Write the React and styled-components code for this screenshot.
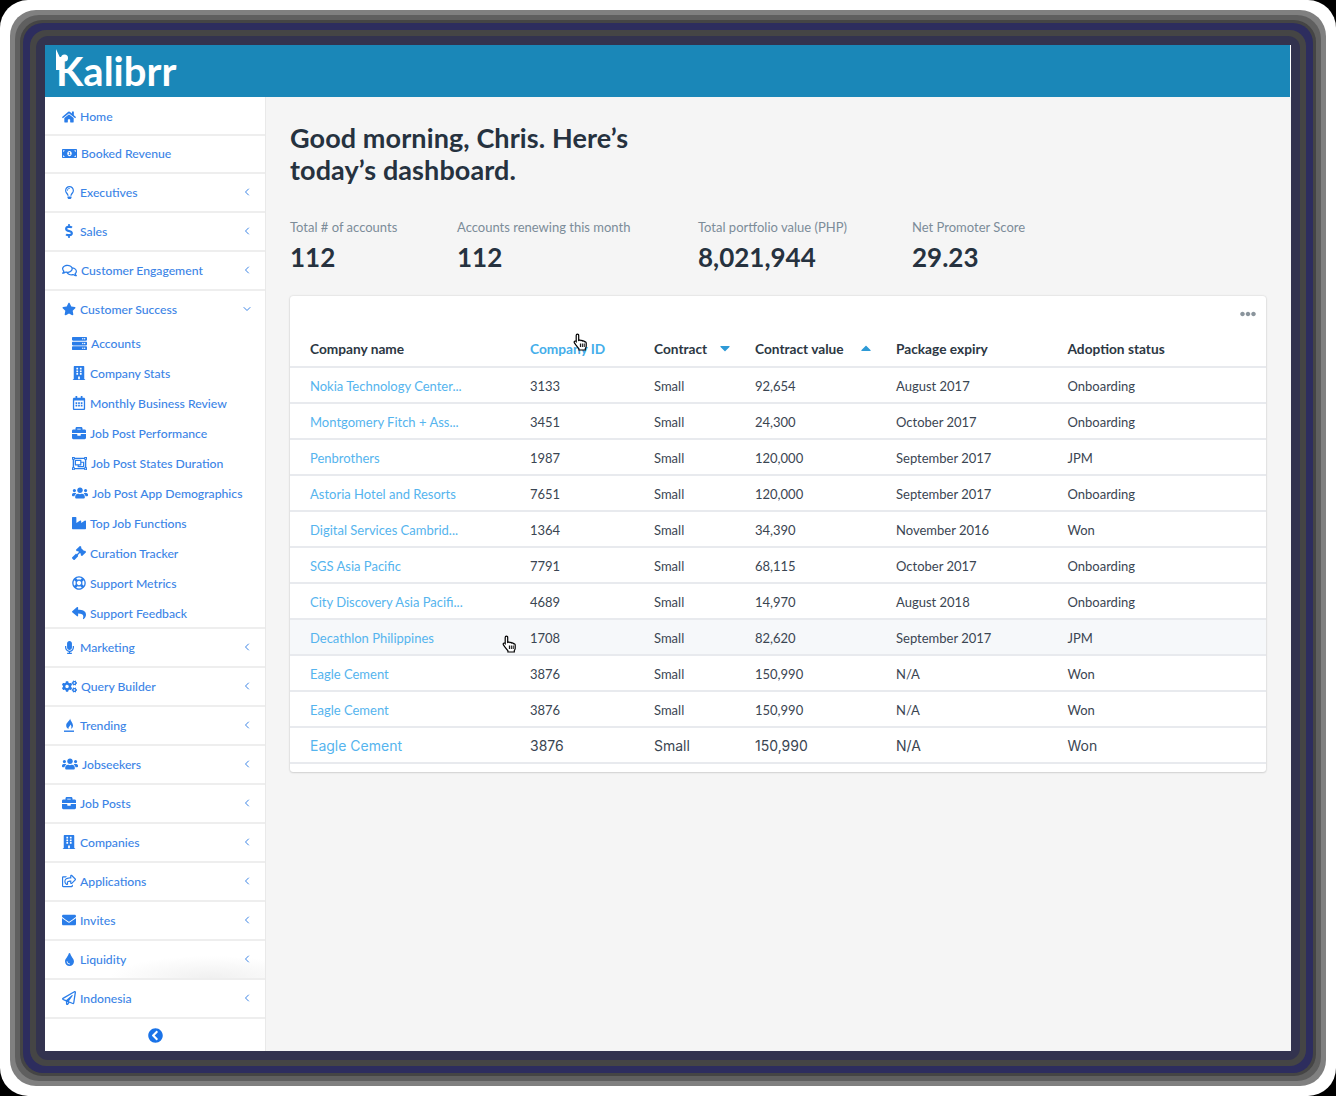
import styled, { createGlobalStyle } from 'styled-components';
import {
  FaHome, FaMoneyBillAlt, FaRegLightbulb, FaDollarSign, FaRegComments, FaStar, FaServer, FaBuilding,
  FaRegCalendarAlt, FaBriefcase, FaRegObjectGroup, FaUsers, FaIndustry, FaGavel, FaRegLifeRing, FaReply,
  FaMicrophone, FaCogs, FaRegShareSquare, FaEnvelope, FaTint, FaRegPaperPlane, FaChevronCircleLeft,
  FaEllipsisH, FaCaretDown, FaCaretUp,
} from 'react-icons/fa';
import { FiChevronLeft, FiChevronDown } from 'react-icons/fi';

const BLUE = '#3b84e6';
const BODY_FONT = 'Lato, "Noto Sans", sans-serif';

const GlobalStyle = createGlobalStyle`
  html, body { margin: 0; padding: 0; background: #000; }
  body { font-family: ${BODY_FONT}; }
  * { box-sizing: border-box; }
`;

const Plate = styled.div`
  width: 1336px;
  height: 1096px;
  padding: 10px;
  background: #fff;
  border-radius: 28px;
`;

const Band = styled.div`
  height: 100%;
  padding: ${(p) => p.$w}px;
  background: ${(p) => p.$c};
  border-radius: ${(p) => p.$r}px;
`;

const Window = styled.div`
  height: 100%;
  display: flex;
  flex-direction: column;
  background: #f5f5f5;
`;

const Header = styled.header`
  position: relative;
  flex: none;
  height: 52px;
  padding-left: 11px;
  background: #1a87b8;
  border-right: 1px solid #fff;
`;

const LogoText = styled.span`
  display: block;
  font-family: Lato, sans-serif;
  font-weight: 700;
  font-size: 40px;
  line-height: 52px;
  color: #fff;
`;

const LogoMark = styled.svg`
  position: absolute;
  left: 11px;
  top: 3px;
`;

const Body = styled.div`
  flex: 1;
  display: flex;
  min-height: 0;
`;

const Sidebar = styled.nav`
  flex: 0 0 221px;
  background: #fff;
  border-right: 1px solid #e9e9e9;
  display: flex;
  flex-direction: column;
`;

const MenuRow = styled.div`
  height: ${(p) => p.$h || 39}px;
  flex: none;
  display: flex;
  align-items: center;
  padding: ${(p) => p.$pt || 0}px 12px ${(p) => (p.$pb === undefined ? 1 : p.$pb)}px 17px;
  font-size: 12.2px;
  font-weight: 500;
  color: ${BLUE};
  border-bottom: 2px solid #eeeeee;
  background: ${(p) => (p.$shaded ? 'radial-gradient(ellipse 100px 22px at 75% 100%, #f0f0f0, transparent)' : 'transparent')};
`;

const MenuIcon = styled.span`
  flex: 0 0 14px;
  margin-right: 4px;
  display: flex;
  justify-content: center;
  color: #2a7de9;
`;

const MenuLabel = styled.span`
  flex: 1;
  white-space: nowrap;
`;

const Chevron = styled.span`
  display: flex;
  font-size: 12px;
  color: ${BLUE};
`;

const Group = styled.div`
  flex: none;
  height: 338px;
  border-bottom: 2px solid #eeeeee;
`;

const GroupHead = styled(MenuRow)`
  height: 38px;
  border-bottom: none;
`;

const SubRow = styled.div`
  height: 30px;
  display: flex;
  align-items: center;
  padding: 0 0 2px 27px;
  font-size: 12.2px;
  font-weight: 500;
  color: ${BLUE};
`;

const Collapse = styled.div`
  flex: 1;
  display: flex;
  align-items: center;
  justify-content: center;
  padding-top: 1px;
  font-size: 15px;
  color: #1a73e8;
`;

const Main = styled.main`
  flex: 1;
  padding: 25px 25px 0 24px;
`;

const Title = styled.h1`
  margin: 0;
  width: 380px;
  font-size: 27px;
  line-height: 32px;
  font-weight: 700;
  letter-spacing: 0.1px;
  color: #26323f;
`;

const Stats = styled.div`
  display: grid;
  grid-template-columns: 167px 241px 214px auto;
  margin-top: 31px;
`;

const StatLabel = styled.div`
  font-size: 13px;
  line-height: 20px;
  color: #7c8c99;
`;

const StatValue = styled.div`
  margin-top: 3px;
  font-size: 26px;
  line-height: 34px;
  font-weight: 700;
  color: #26323f;
`;

const Card = styled.section`
  position: relative;
  margin-top: 22px;
  height: 476px;
  background: #fff;
  border-radius: 3px;
  box-shadow: 0 0 2px rgba(0, 0, 0, 0.18), 0 1px 2px rgba(0, 0, 0, 0.1);
`;

const Dots = styled.div`
  display: flex;
  justify-content: flex-end;
  height: 36px;
  padding: 10px 10px 0 0;
  font-size: 16px;
  color: #8a949c;
`;

const Row = styled.div`
  display: grid;
  grid-template-columns: 220px 124px 101px 141px 171.5px 1fr;
  height: 36px;
  padding-left: 20px;
  padding-top: ${(p) => (p.$large ? 0 : 2)}px;
  align-items: center;
  border-bottom: 2px solid #e8eaee;
  font-size: ${(p) => (p.$large ? 14 : 13)}px;
  font-family: ${(p) => (p.$large ? 'Inter, sans-serif' : BODY_FONT)};
  color: #3a4552;
  background: ${(p) => (p.$hover ? '#f6f8fa' : 'transparent')};
`;

const HeadRow = styled(Row)`
  padding-top: 0;
  padding-bottom: 2px;
`;

const Th = styled.div`
  display: flex;
  align-items: center;
  font-size: 13.7px;
  font-weight: 700;
  color: ${(p) => (p.$active ? '#45aeea' : '#2c3743')};
`;

const SortCaret = styled.span`
  display: flex;
  margin-left: ${(p) => p.$gap}px;
  font-size: 16px;
  color: #2e9ad6;
`;

const Link = styled.span`
  color: #55b4ee;
  white-space: nowrap;
`;

const HandCursor = styled.svg`
  position: absolute;
  left: ${(p) => p.$x}px;
  top: ${(p) => p.$y}px;
`;

function Hand({ x, y }) {
  return (
    <HandCursor $x={x} $y={y} width="15" height="20" viewBox="0 0 15 19">
      <path
        d="M4.4 1.6c.8 0 1.3.6 1.3 1.3v5l.9-.3c.7-.1 1.2.1 1.4.5.7-.3 1.4-.1 1.7.5.8-.3 1.5 0 1.8.6.9-.2 1.7.4 1.7 1.4v3.2c0 1-.4 1.700-.9 2.400v1.300H5.900v-1.300c-.9-.8-1.800-2-2.900-3.500L1.400 10.300c-.4-.6-.3-1.300.2-1.600.5-.3 1.100-.2 1.500.3l.1.1V2.900c0-.7.6-1.300 1.200-1.300z"
        fill="#fff"
        stroke="#000"
        strokeWidth="1.200"
      />
      <path d="M7.400 11v3.500M9.300 11v3.500M11.200 11v3.500" stroke="#000" strokeWidth="1" />
    </HandCursor>
  );
}

function TrendingIcon() {
  return (
    <svg width="12" height="15" viewBox="0 0 12 14">
      <path d="M7 0c.4 2.200-3.800 3.800-3.800 7 0 1.600 1 3 2.600 3.300-.8-1.800 1.400-2.500 1.600-4.300 1.200 1 1.400 2.900.4 4.200C9.400 9.700 10 8.300 10 7 10 4.500 7.500 2.500 7 0z" fill="#2a7de9" />
      <rect x="1" y="12" width="10" height="1.400" fill="#2a7de9" />
    </svg>
  );
}

const topMenu = [
  { label: 'Home', icon: <FaHome size={14} />, h: 39, pt: 2, pb: 0, flat: true },
  { label: 'Booked Revenue', icon: <FaMoneyBillAlt size={15} />, h: 38, pb: 2, flat: true },
  { label: 'Executives', icon: <FaRegLightbulb size={13} /> },
  { label: 'Sales', icon: <FaDollarSign size={14} /> },
  { label: 'Customer Engagement', icon: <FaRegComments size={15} /> },
];

const subMenu = [
  { label: 'Accounts', icon: <FaServer size={15} /> },
  { label: 'Company Stats', icon: <FaBuilding size={14} /> },
  { label: 'Monthly Business Review', icon: <FaRegCalendarAlt size={14} /> },
  { label: 'Job Post Performance', icon: <FaBriefcase size={14} /> },
  { label: 'Job Post States Duration', icon: <FaRegObjectGroup size={15} /> },
  { label: 'Job Post App Demographics', icon: <FaUsers size={16} /> },
  { label: 'Top Job Functions', icon: <FaIndustry size={14} /> },
  { label: 'Curation Tracker', icon: <FaGavel size={14} /> },
  { label: 'Support Metrics', icon: <FaRegLifeRing size={14} /> },
  { label: 'Support Feedback', icon: <FaReply size={14} /> },
];

const bottomMenu = [
  { label: 'Marketing', icon: <FaMicrophone size={13} /> },
  { label: 'Query Builder', icon: <FaCogs size={15} /> },
  { label: 'Trending', icon: <TrendingIcon /> },
  { label: 'Jobseekers', icon: <FaUsers size={16} /> },
  { label: 'Job Posts', icon: <FaBriefcase size={14} /> },
  { label: 'Companies', icon: <FaBuilding size={14} /> },
  { label: 'Applications', icon: <FaRegShareSquare size={14} /> },
  { label: 'Invites', icon: <FaEnvelope size={14} /> },
  { label: 'Liquidity', icon: <FaTint size={13} />, shaded: true },
  { label: 'Indonesia', icon: <FaRegPaperPlane size={14} /> },
];

const stats = [
  { label: 'Total # of accounts', value: '112' },
  { label: 'Accounts renewing this month', value: '112' },
  { label: 'Total portfolio value (PHP)', value: '8,021,944' },
  { label: 'Net Promoter Score', value: '29.23' },
];

const rows = [
  ['Nokia Technology Center...', '3133', 'Small', '92,654', 'August 2017', 'Onboarding'],
  ['Montgomery Fitch + Ass...', '3451', 'Small', '24,300', 'October 2017', 'Onboarding'],
  ['Penbrothers', '1987', 'Small', '120,000', 'September 2017', 'JPM'],
  ['Astoria Hotel and Resorts', '7651', 'Small', '120,000', 'September 2017', 'Onboarding'],
  ['Digital Services Cambrid...', '1364', 'Small', '34,390', 'November 2016', 'Won'],
  ['SGS Asia Pacific', '7791', 'Small', '68,115', 'October 2017', 'Onboarding'],
  ['City Discovery Asia Pacifi...', '4689', 'Small', '14,970', 'August 2018', 'Onboarding'],
  ['Decathlon Philippines', '1708', 'Small', '82,620', 'September 2017', 'JPM'],
  ['Eagle Cement', '3876', 'Small', '150,990', 'N/A', 'Won'],
  ['Eagle Cement', '3876', 'Small', '150,990', 'N/A', 'Won'],
  ['Eagle Cement', '3876', 'Small', '150,990', 'N/A', 'Won'],
];

function MenuItem({ item }) {
  return (
    <MenuRow $h={item.h} $pt={item.pt} $pb={item.pb} $shaded={item.shaded}>
      <MenuIcon>{item.icon}</MenuIcon>
      <MenuLabel>{item.label}</MenuLabel>
      {!item.flat && (
        <Chevron><FiChevronLeft /></Chevron>
      )}
    </MenuRow>
  );
}

function App() {
  return (
    <>
      <GlobalStyle />
      <Plate>
        <Band $c="#808080" $w={5} $r={26}>
          <Band $c="#5f5f5f" $w={5} $r={24}>
            <Band $c="#454545" $w={3} $r={22}>
              <Band $c="#2d2d5e" $w={7} $r={20}>
                <Band $c="#454545" $w={6} $r={16}>
                  <Band $c="#33334f" $w={9} $r={12}>
                    <Window>
                      <Header>
                        <LogoText>Kalibrr</LogoText>
                        <LogoMark width="20" height="24" viewBox="0 0 20 24">
                          <path d="M0 1l7 15v6H0z" fill="#fff" />
                          <circle cx="8.500" cy="10" r="3.500" fill="#fff" />
                        </LogoMark>
                      </Header>
                      <Body>
                        <Sidebar>
                          {topMenu.map((item) => <MenuItem key={item.label} item={item} />)}
                          <Group>
                            <GroupHead $pb={2}>
                              <MenuIcon><FaStar size={14} /></MenuIcon>
                              <MenuLabel>Customer Success</MenuLabel>
                              <Chevron><FiChevronDown /></Chevron>
                            </GroupHead>
                            {subMenu.map((item) => (
                              <SubRow key={item.label}>
                                <MenuIcon>{item.icon}</MenuIcon>
                                <MenuLabel>{item.label}</MenuLabel>
                              </SubRow>
                            ))}
                          </Group>
                          {bottomMenu.map((item) => <MenuItem key={item.label} item={item} />)}
                          <Collapse><FaChevronCircleLeft /></Collapse>
                        </Sidebar>
                        <Main>
                          <Title>Good morning, Chris. Here’s today’s dashboard.</Title>
                          <Stats>
                            {stats.map((s) => (
                              <div key={s.label}>
                                <StatLabel>{s.label}</StatLabel>
                                <StatValue>{s.value}</StatValue>
                              </div>
                            ))}
                          </Stats>
                          <Card>
                            <Dots><FaEllipsisH /></Dots>
                            <HeadRow>
                              <Th>Company name</Th>
                              <Th $active>Company ID</Th>
                              <Th>Contract<SortCaret $gap={10}><FaCaretDown /></SortCaret></Th>
                              <Th>Contract value<SortCaret $gap={14}><FaCaretUp /></SortCaret></Th>
                              <Th>Package expiry</Th>
                              <Th>Adoption status</Th>
                            </HeadRow>
                            {rows.map((r, i) => (
                              <Row key={`${r[0]}-${i}`} $hover={i === 7} $large={i === 10}>
                                <Link>{r[0]}</Link>
                                {r.slice(1).map((cell) => <span key={cell}>{cell}</span>)}
                              </Row>
                            ))}
                            <Hand x={283} y={36} />
                            <Hand x={212} y={338} />
                          </Card>
                        </Main>
                      </Body>
                    </Window>
                  </Band>
                </Band>
              </Band>
            </Band>
          </Band>
        </Band>
      </Plate>
    </>
  );
}

export default App;
